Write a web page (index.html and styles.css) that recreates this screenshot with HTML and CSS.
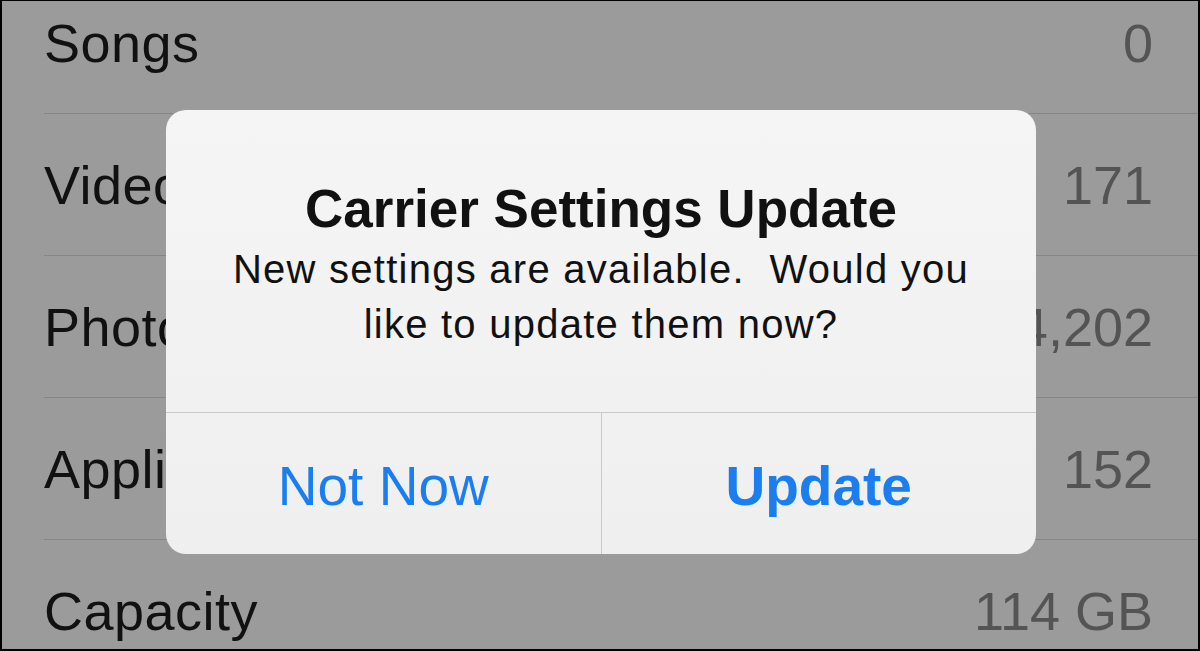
FILE: index.html
```html
<!DOCTYPE html>
<html>
<head>
    <title>Carrier Settings Update</title>
    <link rel="stylesheet" href="styles.css">
</head>
<body>
    <div class="screen">
        <ul class="usage-list">
            <li class="row"><span class="label">Songs</span><span class="value">0</span></li>
            <li class="row"><span class="label">Videos</span><span class="value">171</span></li>
            <li class="row"><span class="label">Photos</span><span class="value">4,202</span></li>
            <li class="row"><span class="label">Applications</span><span class="value">152</span></li>
            <li class="row"><span class="label">Capacity</span><span class="value">114 GB</span></li>
        </ul>

        <div class="alert">
            <div class="alert-message">
                <h2 class="alert-title">Carrier Settings Update</h2>
                <p class="alert-text">New settings are available.&nbsp; Would you like to update them now?</p>
            </div>
            <div class="alert-buttons">
                <button type="button" class="alert-btn">Not Now</button>
                <button type="button" class="alert-btn primary">Update</button>
            </div>
        </div>
    </div>
</body>
</html>
```

FILE: styles.css
```css
html, body {
    margin: 0;
    padding: 0;
}
body {
    font-family: "Liberation Sans", Arial, sans-serif;
    background: #000;
}
.screen {
    position: relative;
    width: 1200px;
    height: 651px;
    box-sizing: border-box;
    border: 2px solid #000;
    border-top-width: 1px;
    background: #9b9b9b;
    overflow: hidden;
}
.usage-list {
    list-style: none;
    margin: -29px 0 0 0;
    padding: 0 0 0 42px;
}
.row {
    display: flex;
    justify-content: space-between;
    align-items: center;
    height: 141px;
    padding-right: 45px;
    border-bottom: 1px solid #868686;
    font-size: 54px;
}
.label {
    color: #111;
    letter-spacing: 0.5px;
}
.value {
    color: #545454;
}

.alert {
    position: absolute;
    left: 164px;
    top: 109px;
    width: 870px;
    height: 444px;
    border-radius: 20px;
    background: linear-gradient(#f5f5f5, #efefef);
    overflow: hidden;
    display: flex;
    flex-direction: column;
}
.alert-message {
    padding: 69px 20px 60px;
    border-bottom: 1px solid #c9c9c9;
    text-align: center;
    color: #111;
}
.alert-title {
    margin: 0 0 3px;
    font-size: 53px;
    line-height: 60px;
    font-weight: bold;
}
.alert-text {
    margin: 0 auto;
    width: 790px;
    font-size: 40px;
    line-height: 55px;
    letter-spacing: 1.25px;
}
.alert-buttons {
    flex: 1;
    display: flex;
}
.alert-btn {
    flex: 1;
    background: none;
    border: none;
    padding: 4px 0 0;
    font-family: inherit;
    font-size: 55px;
    color: #1a7ef0;
    cursor: pointer;
}
.alert-btn + .alert-btn {
    border-left: 1px solid #c9c9c9;
}
.alert-btn.primary {
    font-weight: bold;
}
```
